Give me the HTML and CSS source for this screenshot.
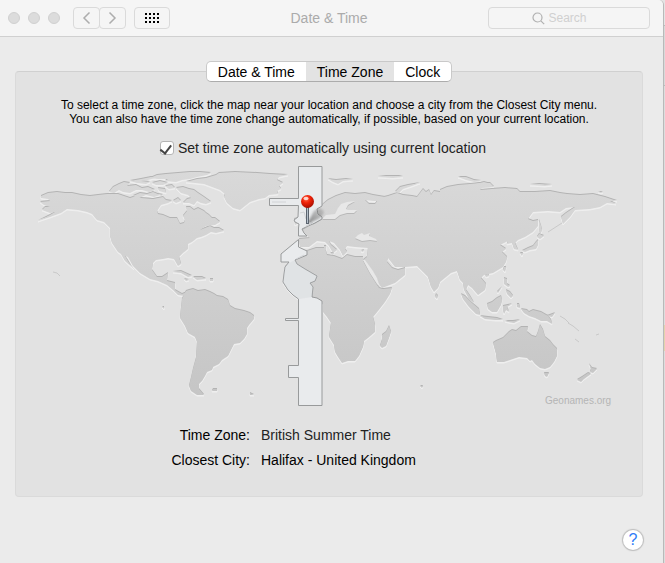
FILE: index.html
```html
<!DOCTYPE html>
<html lang="en">
<head>
<meta charset="utf-8">
<title>Date &amp; Time</title>
<link rel="stylesheet" href="styles.css">
</head>
<body>
<div class="window">
  <header class="titlebar">
    <div class="tools">
      <div class="lights"><i></i><i></i><i></i></div>
      <div class="history">
        <button type="button" aria-label="Back"><svg width="9" height="14" viewBox="0 0 9 14"><path d="M7.500 1.500 2 7l5.500 5.500"/></svg></button>
        <button type="button" aria-label="Forward"><svg width="9" height="14" viewBox="0 0 9 14"><path d="M1.500 1.500 7 7l-5.500 5.500"/></svg></button>
      </div>
      <button class="show-all" type="button" aria-label="Show all">
        <svg width="14" height="10" viewBox="0 0 14 10"><path d="M0 1h14M0 5h14M0 9h14"/></svg>
      </button>
    </div>
    <h1>Date &amp; Time</h1>
    <label class="search">
      <svg width="13" height="13" viewBox="0 0 13 13"><circle cx="5.500" cy="5.500" r="4.500"/><path d="m8.800 8.800 3.400 3.400"/></svg>
      <input type="text" placeholder="Search" aria-label="Search">
    </label>
  </header>

  <main>
    <nav class="tabs">
      <button type="button">Date &amp; Time</button>
      <button type="button" class="active">Time Zone</button>
      <button type="button">Clock</button>
    </nav>
    <section class="panel">
      <p class="hint">To select a time zone, click the map near your location and choose a city from the Closest City menu.<br>You can also have the time zone change automatically, if possible, based on your current location.</p>
      <label class="auto"><input type="checkbox" checked><span>Set time zone automatically using current location</span></label>

      <svg class="map" viewBox="16 160 626 250" role="img" aria-label="World map">
        <defs>
          <linearGradient id="landFill" gradientUnits="userSpaceOnUse" x1="0" y1="170" x2="0" y2="400">
            <stop offset="0" stop-color="#d9d9d9"/><stop offset="1" stop-color="#c5c5c5"/>
          </linearGradient>
          <radialGradient id="pinHead" cx=".4" cy=".3" r=".7">
            <stop offset="0" stop-color="#ff6a4d"/><stop offset=".45" stop-color="#f02208"/><stop offset="1" stop-color="#a80e00"/>
          </radialGradient>
          <linearGradient id="pinShadow" x1="0" y1="1" x2="1" y2="0">
            <stop offset="0" stop-color="#555" stop-opacity=".7"/><stop offset="1" stop-color="#777" stop-opacity=".25"/>
          </linearGradient>
          <filter id="soft"><feGaussianBlur stdDeviation="1.200"/></filter>
          <g id="land">
            <!-- North America -->
            <path d="M41 196L48 193 57 192 65 193 72 193 81 195 90 196 98 195 107 194 118 194 130 198 136 196 141 198 153 199 163 197 166 200 172 201 168 203 161 205 157 211 158 214 163 215 170 218 177 218 180 224 184 223 185 220 183 216 187 211 186 207 190 207 194 210 198 208 204 211 206 213 209 215 212 218 215 218 220 222 215 225 206 226 200 230 210 226 214 228 219 228 224 231 216 233 211 232 206 235 201 237 197 238 192 242 188 244 188 249 183 253 179 257 181 264 178 266 174 259 168 258 163 259 156 260 153 263 152 270 157 277 162 277 165 275 168 273 167 281 175 283 175 290 182 294 187 292 185 296 178 295 173 290 167 285 158 281 150 279 140 273 133 266 128 257 125 256 131 266 134 269 125 261 121 254 118 252 112 243 110 236 110 228 104 222 97 220 92 214 87 212 78 210 67 209 61 213 50 217 38 221 50 215 55 212 50 213 42 210 45 207 50 207 44 205 40 202 50 201 48 199 41 198Z"/>
            <!-- Arctic archipelago -->
            <path d="M109 192L113 187 119 184 124 182 130 183 127 186 136 185 142 188 148 187 155 190 149 192 142 190 136 190 130 193 123 192 119 190 114 193ZM133 196L140 193 147 194 153 192 160 195 154 197 146 195 139 198ZM130 181L141 179 151 177 155 178 148 180 141 181 150 182 146 184 137 183ZM152 183L160 181 168 183 163 185 156 185ZM158 188L165 189 166 193 159 191ZM158 194L163 195 161 196Z"/>
            <path d="M176 188L183 187 189 189 194 190 198 193 204 197 211 202 206 204 201 203 197 201 194 205 189 203 183 203 187 199 191 198 188 195 181 193ZM150 178L157 175 166 174 178 173 190 172 200 172 211 173 207 175 197 177 190 179 182 180 176 182 165 181 168 179 158 179ZM173 201L178 198 181 201 176 203ZM165 186L172 185 175 188 169 189Z"/>
            <!-- Greenland -->
            <path d="M186 182L197 179 206 178 216 175 219 173 235 172 257 173 270 174 288 175 279 177 277 180 283 183 279 186 281 189 277 191 278 194 269 195 265 198 259 199 250 202 245 206 240 210 233 208 227 203 224 197 225 194 220 190 212 187 204 184Z"/>
            <!-- Caribbean -->
            <path d="M173 272L181 271 192 276 188 277 181 273ZM193 277L202 277 206 279 197 280ZM184 279L189 280 186 281ZM210 279L213 279 213 281 210 281ZM162 307L164 307 164 309Z"/>
            <!-- South America -->
            <path d="M182 299L186 291 189 290 193 289 198 291 205 290 210 292 214 294 217 296 223 297 228 300 230 306 235 309 244 311 250 313 254 316 254 319 249 325 247 328 247 334 244 339 240 343 234 344 231 350 228 356 222 360 219 364 213 367 212 370 207 372 205 376 202 381 199 384 199 389 204 395 197 395 191 391 189 386 191 378 193 369 196 358 197 342 195 337 188 333 185 326 180 318 181 308ZM213 389L217 389 217 391 212 391ZM250 393L254 395 250 395Z"/>
            <!-- Eurasia -->
            <path d="M317 208L322 205 328 200 336 196 345 193 355 194 365 193 373 195 385 197 383 200 374 201 365 200 369 204 375 204 378 200 380 198 388 196 397 193 403 195 412 196 417 197 423 189 426 192 429 190 431 195 434 191 440 192 440 190 447 187 458 185 470 184 480 183 490 183 494 187 482 188 480 190 492 189 505 188 517 189 520 192 535 192 550 191 560 193 567 194 580 195 593 194 605 197 617 201 610 201 616 204 607 203 600 207 590 209 575 210 570 217 563 224 561 217 566 213 575 207 566 208 560 212 548 211 533 212 528 219 533 221 538 220 538 226 533 232 525 237 518 240 515 243 518 250 514 249 512 243 507 244 508 241 500 245 506 249 502 252 507 257 506 262 503 267 493 273 484 275 481 278 486 284 485 290 478 295 472 288 468 285 466 290 470 296 474 303 469 299 464 290 463 283 460 280 457 271 451 273 440 282 438 288 434 292 431 287 428 277 423 272 417 266 405 267 395 267 388 258 387 262 392 268 398 270 405 268 405 275 395 283 382 288 378 283 370 271 363 260 367 257 368 248 355 247 347 246 345 249 347 252 343 256 340 250 334 243 329 241 331 245 337 250 333 253 329 246 325 242 317 241 309 247 300 247 299 239 310 238 307 236 302 230 308 227 316 223 321 220 322 213 327 214 327 217 320 216Z"/>
            <!-- Africa -->
            <path d="M307 251L316 248 325 248 327 255 334 256 342 259 347 255 355 257 363 257 363 260 371 275 379 288 383 289 392 288 390 294 385 302 378 311 373 317 375 325 375 332 368 338 364 341 363 347 359 356 355 361 348 361 342 363 338 357 335 352 334 345 329 337 330 330 331 323 327 317 323 312 323 305 320 300 312 298 305 299 298 299 292 294 288 290 283 283 285 275 285 267 290 263 295 259 302 253Z"/>
            <path d="M389 326L391 332 389 338 386 346 382 348 380 346 382 340 382 335 386 332Z"/>
            <!-- British Isles -->
            <path d="M301 214L305 212 306 216 310 221 314 223 311 227 303 228 305 224 302 221ZM294 219L298 218 299 223 295 225Z"/>
            <!-- Sardinia, Sicily, Crete, Cyprus -->
            <path d="M324 246L326 246 326 250 324 250ZM330 253L334 253 333 255ZM346 256L351 256 348 257ZM361 251L364 250 363 252Z"/>
            <!-- Svalbard, Novaya Zemlya and northern islands -->
            <path d="M328 179L336 180 346 179 353 180 343 181 338 184 333 182ZM378 177L386 176 399 176 403 177 393 178ZM395 192L400 187 408 185 420 183 412 186 403 189 399 193ZM458 177L466 177 474 180 481 181 474 182 466 180ZM476 184L484 182 491 184ZM530 185L539 184 552 185 545 186ZM598 192L603 192 601 193Z"/>
            <!-- Japan and Sakhalin -->
            <path d="M539 220L541 226 542 230 540 236 539 228ZM539 234L544 236 540 239 537 237ZM538 240L538 245 536 249 530 250 525 252 522 251 528 248 533 246 536 242ZM520 253L523 253 522 256ZM504 267L506 267 505 272 503 270ZM485 275L488 274 489 276 486 277ZM436 294L438 296 437 299 435 297Z"/>
            <!-- Philippines -->
            <path d="M504 278L507 279 507 284 510 286 508 287 504 284ZM506 290L510 292 513 296 511 298 507 294ZM502 287L498 293 497 292Z"/>
            <!-- Indonesia and New Guinea -->
            <path d="M461 294L465 296 472 303 479 309 480 315 476 314 469 307 463 299ZM487 304L492 302 497 298 501 296 502 300 501 305 497 312 492 312 488 309ZM480 316L488 317 497 318 503 320 495 320 485 319ZM503 306L512 304 507 307 509 312 506 310 504 314 503 310ZM505 321L513 321 520 320 514 323 508 322ZM517 304L519 304 520 308 517 307ZM521 309L527 310 529 312 533 310 541 312 548 316 551 320 552 324 547 321 541 321 535 318 529 316 524 313ZM547 316L555 313 552 317Z"/>
            <!-- Australia, Tasmania and New Zealand -->
            <path d="M493 343L496 341 503 338 509 332 512 330 516 331 521 327 528 327 527 332 532 336 536 337 538 332 540 325 543 330 545 337 550 341 553 345 557 349 557 356 554 362 550 367 545 369 540 368 535 364 532 360 530 361 527 358 519 357 510 360 504 362 497 362 496 354ZM544 373L549 373 547 377 545 376ZM589 364L592 368 597 369 593 373 590 372 591 369ZM588 373L591 374 584 379 581 382 577 380 582 377ZM420 386L423 386 422 388Z"/>
          </g>
          <g id="sea">
            <path d="M322 219L326 215 335 214 338 208 341 204 347 202 355 201 348 205 346 209 348 210 357 210 354 213 347 213 340 215 335 219 328 219Z"/>
            <path d="M355 238L358 235 362 233 364 235 367 234 370 233 369 236 376 239 377 241 370 240 362 241Z"/>
            <path d="M363 260L365 260 373 271 377 278 380 287 377 284 370 273Z"/>
          </g>
        </defs>
        <use href="#land" y="1" fill="#efefef" stroke="#efefef"/>
        <use href="#land" y="-1" fill="#b3b3b3"/>
        <use href="#land" fill="url(#landFill)"/>
        <use href="#sea" fill="#b8b8b8" y="1"/>
        <use href="#sea" fill="#e8e8e8"/>
        <path class="thin" d="M560 316L565 319 569 323M568 323L573 326 579 331M575 339L579 342M596 335L599 334M53 272L57 273 60 276M562 223L548 232"/>
        <g class="zone">
          <path d="M298.500 166.500H322V206L317 209 318 214 322 217V219L315 223 306 227 302 229 304 233 307 236H298.500V228L299 224 295 222 294 220 298 217 298.500 205.500H269.500V198.500H298.500Z"/>
          <path d="M298.500 239.500V247L307 251 307 255 295 260 297 264 305 269 317 276 315 281 310 283 313 287 312 297 317 298 322 301V405.500H298.500V377.500H288.500V365.500H298.500V320.500H285.500V318.500H298.500V299L293 295 288 290 283 282 284 274 285 267 289 262H281V254Z"/>
        </g>
        <path d="M289 263L295 260 297 264 305 269 317 276 315 281 310 283 313 287 312 297 299 299 288 290 283 282 285 267Z" fill="#cdd0d5" opacity=".3"/>
        <path d="M296 259l8-4M300 213l4-1 2 7 7 4-7 3M272 202h14" fill="none" stroke="#d1d3d6"/>
        <path d="m307 224 7-13q7-6 10 1-1 5-8 8z" fill="url(#pinShadow)" filter="url(#soft)"/>
        <path d="M307.500 206v18" stroke="#5c6570" stroke-width="3"/><path d="M307.500 206v17" stroke="#b5c0ca" stroke-width="1"/>
        <circle cx="307.500" cy="201.500" r="6.500" fill="url(#pinHead)"/>
        <ellipse cx="306" cy="198.500" rx="2.500" ry="1.700" fill="#fff" opacity=".75"/>
        <text x="545" y="404">Geonames.org</text>
      </svg>

      <dl class="details">
        <dt>Time Zone:</dt><dd class="muted">British Summer Time</dd>
        <dt>Closest City:</dt><dd>Halifax - United Kingdom</dd>
      </dl>
    </section>
    <button class="help" type="button" aria-label="Help">?</button>
  </main>
</div>
</body>
</html>
```

FILE: styles.css
```css
* { box-sizing: border-box; }
body {
  margin: 0;
  padding-right: 1px;
  background: linear-gradient(#e4e4e4 0 25px, #bbb 25px 26px, #d9d9d9 26px 85px, #bbb 85px 86px, #ddd 86px 325px, #e3d3ad 325px 351px, #ddd 351px);
  font: 14px/16px "Liberation Sans", Arial, sans-serif;
  color: #000;
}
button, input { font: inherit; color: inherit; margin: 0; }
button { padding: 0; border: 0; background: none; }
.window {
  min-height: 100vh;
  border-right: 1px solid #b9b9b9;
  border-top-right-radius: 5px;
  background: #ebebeb;
}
.titlebar {
  display: grid;
  grid-template-columns: 1fr auto 1fr;
  align-items: center;
  height: 37px;
  padding: 0 13px 0 8px;
  border-bottom: 1px solid #d0d0d0;
  border-top-right-radius: 5px;
  background: #f5f5f5;
}
.titlebar h1 { margin: 0; font-size: 14px; font-weight: 400; color: #ababab; }
.tools, .lights, .history { display: flex; align-items: center; }
.lights { gap: 8px; margin-right: 13px; }
.lights i { width: 12px; height: 12px; border: 1px solid #d0d0d0; border-radius: 50%; background: #dcdcdc; }
.history { margin-right: 8px; }
.history button, .show-all {
  display: grid;
  place-items: center;
  width: 27px;
  height: 22px;
  border: 1px solid #dadada;
  border-radius: 4px;
}
.history button + button { margin-left: -1px; }
.tools .show-all { width: 36px; }
.tools path { fill: none; stroke: #adadad; stroke-width: 1.5; }
.tools .show-all path { stroke: #000; stroke-width: 2; stroke-dasharray: 2; }
.search {
  display: flex;
  align-items: center;
  justify-self: end;
  justify-content: center;
  gap: 4px;
  width: 162px;
  height: 22px;
  padding-right: 14px;
  border: 1px solid #dadada;
  border-radius: 4px;
}
.search svg { fill: none; stroke: #b0b0b0; stroke-width: 1.2; }
.search input { width: 44px; padding: 0; border: 0; outline: 0; background: none; font-size: 12px; }
.search input::placeholder { color: #d0d0d0; opacity: 1; }
main { display: flex; flex-direction: column; padding: 24px 20px 12px 15px; }
.tabs {
  z-index: 1;
  display: flex;
  align-self: center;
  height: 21px;
  border: 1px solid #c9c9c9;
  border-bottom-color: #acacac;
  border-radius: 5px;
  overflow: hidden;
  background: #fff;
}
.tabs button { padding: 0 11px; }
.tabs .active { background: #e3e3e3; }
.panel {
  margin-top: -11px;
  padding: 26px 0 28px;
  border: 1px solid #dadada;
  border-top-color: #d0d0d0;
  border-radius: 4px;
  background: #e2e2e2;
}
.hint { margin: 0 0 14px; font-size: 12px; line-height: 14px; text-align: center; }
.auto { display: flex; justify-content: center; align-items: center; gap: 4px; padding-right: 12px; color: #222; }
.auto input {
  appearance: none;
  display: grid;
  justify-content: center;
  width: 14px;
  height: 14px;
  padding-top: 1px;
  border: 1px solid #b5b5b5;
  border-radius: 3px;
  background: #fff;
}
.auto input:checked::before {
  content: "";
  width: 5px;
  height: 9px;
  border: solid #444;
  border-width: 0 2px 2px 0;
  transform: rotate(38deg);
  transform-origin: 50% 40%;
}
.map { display: block; width: 100%; margin-top: 4px; }
.map text { font-size: 10px; fill: #b5b5b5; }
.map .thin { fill: none; stroke: #c9c9c9; }
.zone { fill: #e9ebed; stroke: #989a9b; }
.details {
  display: grid;
  grid-template-columns: 234px 1fr;
  gap: 9px 11px;
  margin: 17px 0 0;
}
.details dt { text-align: right; }
.details dd { margin: 0; }
.details .muted { color: #222; }
.help {
  align-self: flex-end;
  width: 20px;
  height: 20px;
  margin-top: 33px;
  border-radius: 50%;
  background: #fff;
  box-shadow: 0 0 1px 1px #bdbdbd;
  color: #2f7cf6;
  font-size: 16px;
  line-height: 20px;
}
```
